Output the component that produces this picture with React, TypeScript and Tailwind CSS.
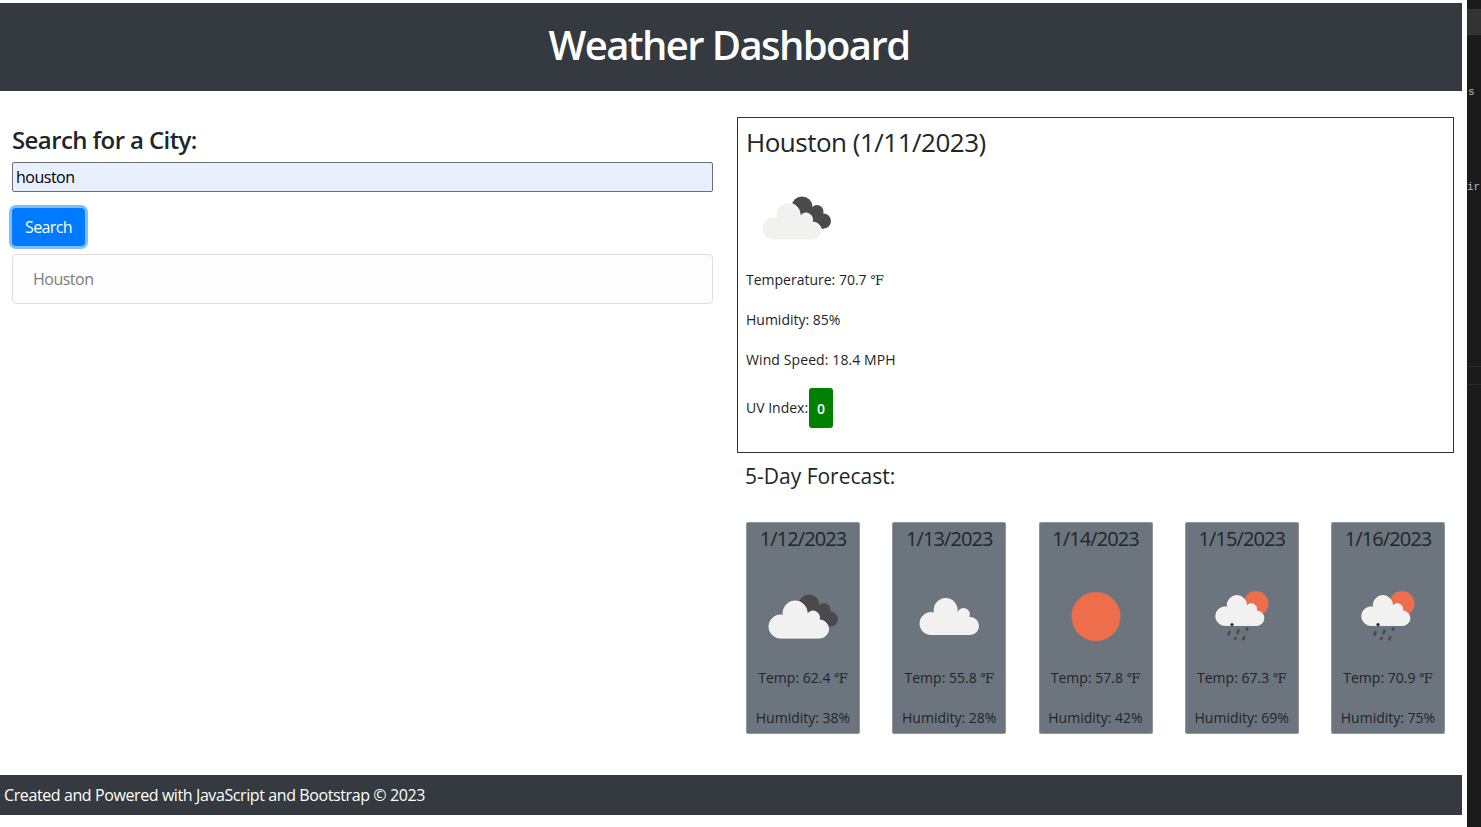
const forecast = [
  { date: "1/12/2023", temp: "62.4", humidity: "38%", icon: "clouds" },
  { date: "1/13/2023", temp: "55.8", humidity: "28%", icon: "cloud" },
  { date: "1/14/2023", temp: "57.8", humidity: "42%", icon: "sun" },
  { date: "1/15/2023", temp: "67.3", humidity: "69%", icon: "rain" },
  { date: "1/16/2023", temp: "70.9", humidity: "75%", icon: "rain" },
];

const cloudPath =
  "M11.5 37A11.5 11.5 0 1 1 13.4 14.4A12 12 0 1 1 37 14A6.5 6.5 0 0 1 49 19A9 9 0 1 1 50 37Z";

const Fahrenheit = () => (
  <span className="font-['DejaVu_Serif',serif] text-[13px]">℉</span>
);

const WeatherIcon = ({ name }: { name: string }) => (
  <svg viewBox="0 0 100 100" className="w-[100px] h-[100px] block shrink-0">
    {name === "clouds" && (
      <g>
        <g fill="#4a4a4c">
          <circle cx="56" cy="39" r="10.5" />
          <circle cx="71" cy="43.5" r="6.5" />
          <circle cx="77.5" cy="53" r="7.5" />
          <polygon points="50,48 64,40 78,46 78,60.5 60,60.5" />
        </g>
        <path
          d={cloudPath}
          transform="translate(17 35)"
          fill="#f1f1f0"
          stroke="#ffffff"
          strokeWidth="1"
        />
      </g>
    )}
    {name === "cloud" && (
      <path d={cloudPath} transform="translate(21.5 32)" fill="#f1f1f0" />
    )}
    {name === "sun" && <circle cx="50" cy="50.5" r="24.5" fill="#ee6e4b" />}
    {name === "rain" && (
      <g>
        <circle cx="64" cy="37.5" r="12.5" fill="#ee6e4b" />
        <path
          d={cloudPath}
          transform="translate(24.5 29.5) scale(0.81)"
          fill="#f1f1f0"
          stroke="#ffffff"
          strokeWidth="1"
        />
        <circle cx="40" cy="58.5" r="1.6" fill="#222222" />
        <g stroke="#4a4a4c" strokeWidth="2.6" strokeLinecap="round">
          <line x1="36.5" y1="68.5" x2="37.5" y2="66" />
          <line x1="45.5" y1="67" x2="46.5" y2="64.5" />
          <line x1="54.8" y1="63.6" x2="55.4" y2="62.6" />
          <line x1="43" y1="72.8" x2="43.6" y2="72" />
          <line x1="51.2" y1="73.4" x2="52.2" y2="71.2" />
        </g>
      </g>
    )}
  </svg>
);

const ForecastCard = ({ day }: { day: (typeof forecast)[number] }) => (
  <div className="w-[114px] h-[212px] bg-[#6c757d] rounded-[2px] border border-[#dee2e6]/30 box-border flex flex-col items-center text-[#212529]">
    <div className="h-[43px] leading-[31px] text-[20px] tracking-[-0.9px] w-full text-center shrink-0">
      {day.date}
    </div>
    <WeatherIcon name={day.icon} />
    <p className="h-[24px] leading-[24px] text-[14px] whitespace-nowrap">
      Temp: {day.temp} <Fahrenheit />
    </p>
    <p className="h-[24px] leading-[24px] mt-[16px] text-[14px] whitespace-nowrap">
      Humidity: {day.humidity}
    </p>
  </div>
);

export default function App() {
  return (
    <div className="flex h-[827px] w-[1481px] overflow-hidden bg-white font-['Open_Sans','Noto_Sans',sans-serif] text-[#212529]">
      <div className="w-[1462px] shrink-0 pt-[3px] flex flex-col">
        <header className="h-[88px] bg-[#343a40] flex items-center justify-center pr-[4px] pb-[5px]">
          <h1 className="text-[40px] font-semibold text-white tracking-[-1.6px]">
            Weather Dashboard
          </h1>
        </header>

        <main className="flex pt-[26px] pl-[12px]">
          <section className="w-[701px] shrink-0">
            <h2 className="h-[45px] leading-[46px] text-[24px] font-semibold tracking-[-0.6px]">
              Search for a City:
            </h2>
            <input
              readOnly
              value="houston"
              className="block w-full h-[30px] bg-[#e8f0fe] border border-[#6b6f75] rounded-[2px] px-[3px] text-[16px] tracking-[-0.5px] text-black outline-none"
            />
            <button className="block mt-[16px] h-[38px] w-[73px] bg-[#007bff] text-white text-[16px] tracking-[-0.6px] rounded-[4px] ring-[3px] ring-[#80bdff]">
              Search
            </button>
            <ul className="mt-[8px] h-[50px] bg-[#fdfdfd] border border-[#dfdfdf] rounded-[4px] flex items-center px-[20px] text-[16px] tracking-[-0.5px] text-[#7d7d7d]">
              <li>Houston</li>
            </ul>
          </section>

          <section className="w-[717px] ml-[24px] shrink-0">
            <div className="border border-[#333333] pl-[8px] pb-[24px]">
              <h3 className="h-[50px] leading-[48px] text-[26px] tracking-[-0.5px]">
                Houston (1/11/2023)
              </h3>
              <WeatherIcon name="clouds" />
              <p className="h-[24px] leading-[24px] text-[14px]">
                Temperature: 70.7 <Fahrenheit />
              </p>
              <p className="h-[24px] leading-[24px] mt-[16px] text-[14px]">
                Humidity: 85%
              </p>
              <p className="h-[24px] leading-[24px] mt-[16px] text-[14px] tracking-[0.1px]">
                Wind Speed: 18.4 MPH
              </p>
              <p className="h-[40px] mt-[16px] flex items-center text-[14px]">
                <span className="mt-[-2px]">UV Index:</span>
                <span className="ml-[1px] w-[24px] h-[40px] bg-[#008000] rounded-[3px] text-white font-semibold flex items-center justify-center">
                  0
                </span>
              </p>
            </div>
            <h4 className="h-[46px] leading-[46px] pl-[8px] text-[21px]">
              5-Day Forecast:
            </h4>
            <div className="mt-[23px] px-[9px] flex justify-between">
              {forecast.map((day) => (
                <ForecastCard key={day.date} day={day} />
              ))}
            </div>
          </section>
        </main>

        <footer className="mt-[41px] h-[40px] bg-[#343a40] text-white flex items-center pl-[4px] text-[16px] tracking-[-0.4px]">
          Created and Powered with JavaScript and Bootstrap © 2023
        </footer>
      </div>

      <aside className="ml-[5px] w-[14px] shrink-0 bg-[#1b1b1b] overflow-hidden font-['Liberation_Mono',monospace] text-[11px] text-[#bbbbbb]">
        <div className="mt-[9px] h-[26px] bg-[#333333]" />
        <div className="mt-[50px] h-[14px] leading-[14px] pl-[1px]">s</div>
        <div className="mt-[81px] h-[14px] leading-[14px]">ir</div>
        <div className="mt-[172px] h-px bg-[#2a2a2a]" />
        <div className="mt-[17px] h-px bg-[#2a2a2a]" />
      </aside>
    </div>
  );
}
